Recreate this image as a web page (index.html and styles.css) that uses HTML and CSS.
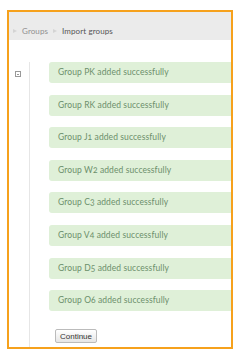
FILE: index.html
```html
<!DOCTYPE html>
<html lang="en">

<head>
    <meta charset="UTF-8">
    <meta name="viewport" content="width=device-width, initial-scale=1.0">
    <title>Import groups</title>
    <link rel="stylesheet" href="styles.css">
</head>

<body>

    <div class="frame">
        <div class="navbar">
            <ul class="breadcrumb">
                <li><a href="#">Groups</a></li>
                <li class="current">Import groups</li>
            </ul>
        </div>

        <div class="page">
            <div class="block-dock">
                <span class="dock-icon"></span>
            </div>

            <div class="main">
                <div class="alert">Group PK added successfully</div>
                <div class="alert">Group RK added successfully</div>
                <div class="alert">Group J1 added successfully</div>
                <div class="alert">Group W2 added successfully</div>
                <div class="alert">Group C3 added successfully</div>
                <div class="alert">Group V4 added successfully</div>
                <div class="alert">Group D5 added successfully</div>
                <div class="alert">Group O6 added successfully</div>
                <button class="btn">Continue</button>
            </div>
        </div>
    </div>

</body>

</html>
```

FILE: styles.css
```css
* {
    margin: 0;
    padding: 0;
    box-sizing: border-box;
}

body {
    background: #fff;
    font-family: Lato, "Open Sans", sans-serif;
}

.frame {
    margin: 10px 0 0 7px;
    width: 226px;
    height: 339px;
    border: 2px solid #f6a11c;
    overflow: hidden;
    display: flex;
    flex-direction: column;
}

.navbar {
    height: 28px;
    background: #ebebeb;
    padding: 14px 0 0 4px;
}

.breadcrumb {
    list-style: none;
    display: flex;
    font-size: 8px;
    line-height: 10px;
    letter-spacing: 0.1px;
}

.breadcrumb li {
    display: flex;
    align-items: center;
}

.breadcrumb li::before {
    content: "";
    border-left: 4px solid #d4d4d4;
    border-top: 2.5px solid transparent;
    border-bottom: 2.5px solid transparent;
    margin: 0 5px 0 0;
}

.breadcrumb li + li::before {
    margin-left: 5px;
}

.breadcrumb a {
    color: #8f8f8f;
    text-decoration: none;
}

.breadcrumb .current {
    color: #555;
}

.page {
    flex: 1;
    display: flex;
    margin-top: 22px;
}

.block-dock {
    width: 21px;
    border-right: 1px solid #e6e6e6;
    padding: 9px 0 0 6px;
}

.dock-icon {
    display: block;
    width: 6px;
    height: 6px;
    border: 1px solid #999;
    border-top-width: 1.5px;
    position: relative;
}

.dock-icon::after {
    content: "";
    position: absolute;
    left: 1px;
    right: 1px;
    top: 1.5px;
    height: 1px;
    background: #999;
}

.main {
    flex: 1;
    padding-left: 19px;
    margin-right: -10px;
}

.alert {
    height: 21px;
    margin-bottom: 11.6px;
    padding-left: 9px;
    background: #dff0d8;
    border-radius: 3px;
    color: #6c8f6b;
    font-size: 8.5px;
    line-height: 21px;
    letter-spacing: 0.1px;
    font-variant-numeric: oldstyle-nums;
}

.btn {
    margin: 0.4px 0 0 6px;
    width: 42px;
    height: 14px;
    font-family: "Liberation Sans", Arial, sans-serif;
    font-size: 8px;
    color: #333;
    background: linear-gradient(#fff, #e6e6e6);
    border: 1px solid #bbb;
    border-radius: 2px;
    cursor: pointer;
}
```
